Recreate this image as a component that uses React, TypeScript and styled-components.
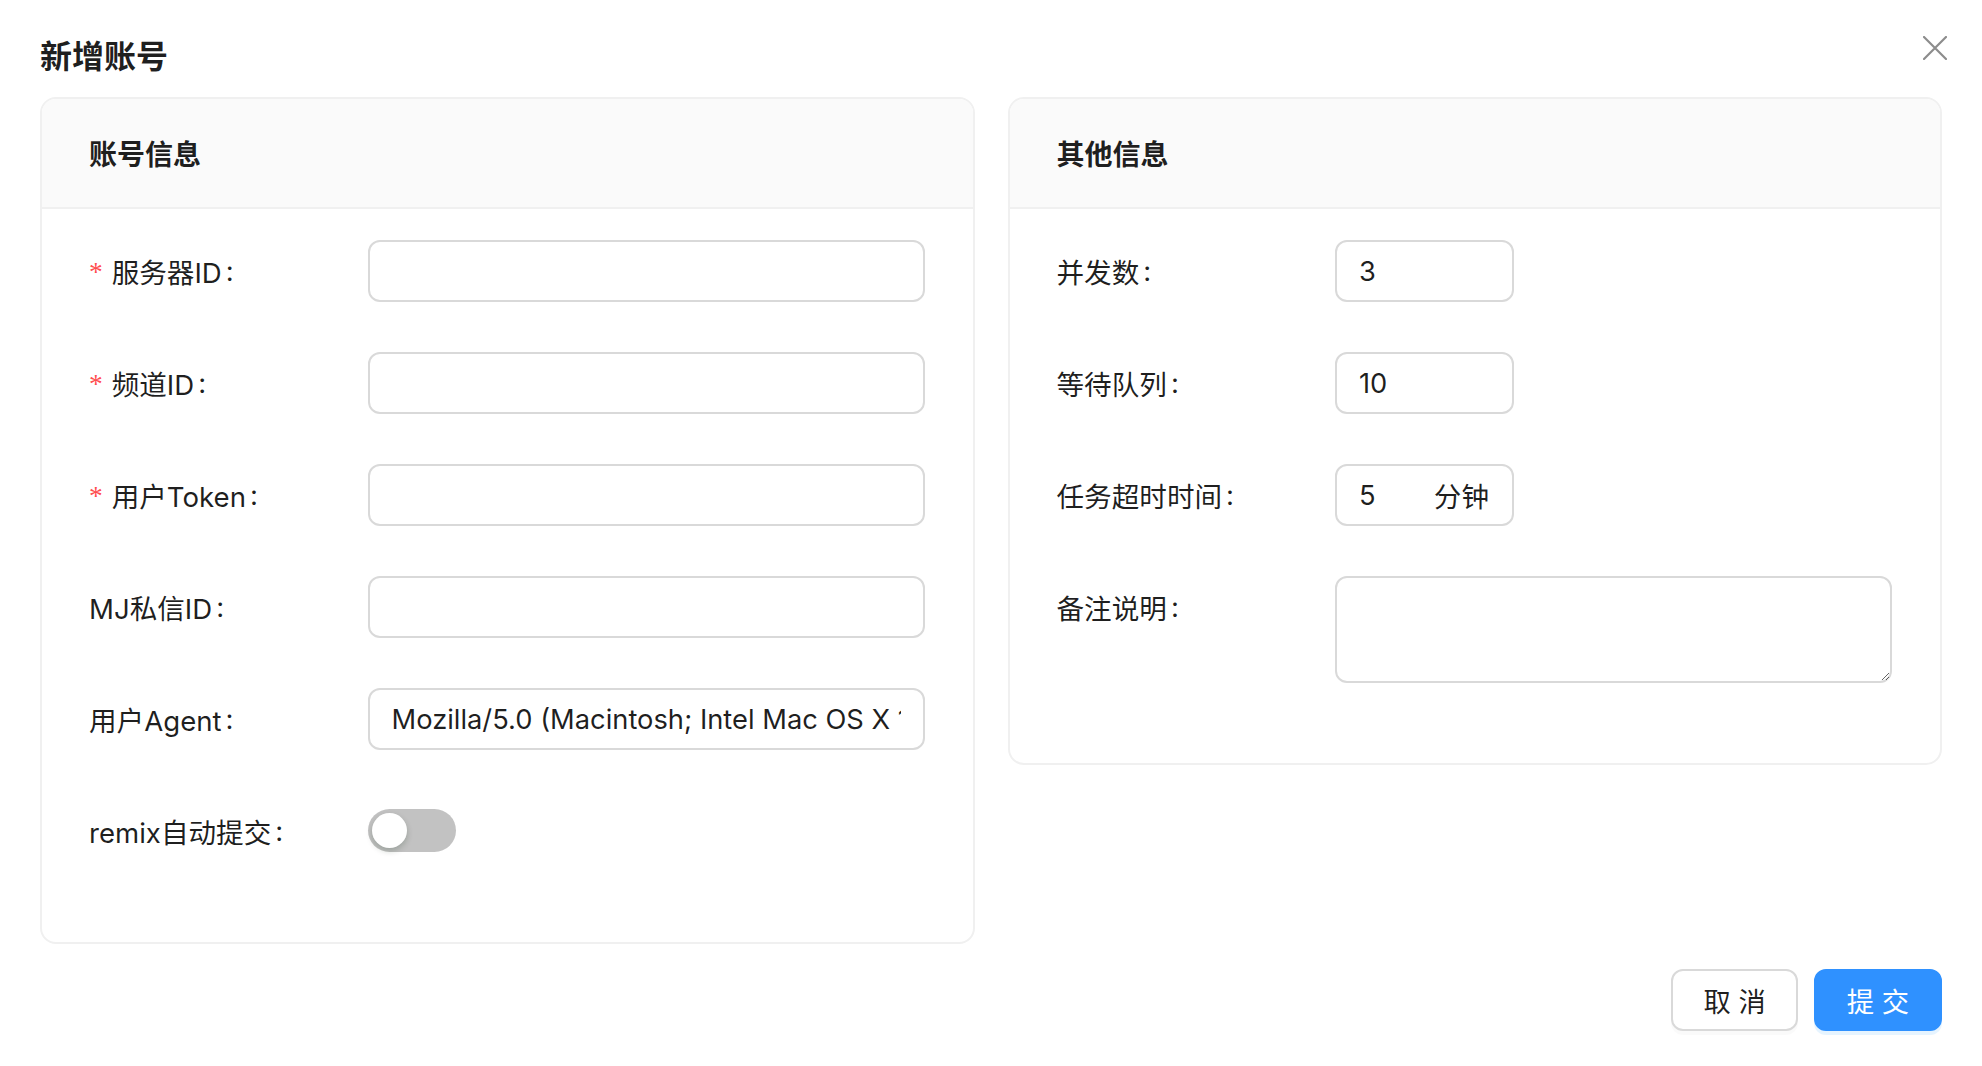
import React from "react";
import styled, { createGlobalStyle } from "styled-components";

const GlobalStyle = createGlobalStyle`
  html, body {
    margin: 0;
    padding: 0;
    background: #ffffff;
  }
  body {
    font-family: Inter, "Noto Sans CJK SC", sans-serif;
    color: rgba(0, 0, 0, 0.88);
  }
  * { box-sizing: border-box; }
`;

const Modal = styled.div`
  position: relative;
  padding: 33px 40px 30px 40px;
  background: #ffffff;
`;

const Title = styled.div`
  font-size: 32px;
  font-weight: 600;
  line-height: 47px;
  margin-bottom: 17px;
`;

const CloseButton = styled.button`
  position: absolute;
  top: 36px;
  right: 35px;
  width: 24px;
  height: 24px;
  padding: 0;
  border: none;
  background: transparent;
  display: flex;
  align-items: center;
  justify-content: center;
  cursor: pointer;
`;

const Columns = styled.div`
  display: grid;
  grid-template-columns: 1fr 1fr;
  column-gap: 33px;
  align-items: start;
`;

const Card = styled.section`
  border: 2px solid #f0f0f0;
  border-radius: 16px;
  overflow: hidden;
  background: #ffffff;
`;

const CardHeader = styled.div`
  height: 110px;
  display: flex;
  align-items: center;
  padding: 0 47px;
  background: #fafafa;
  border-bottom: 2px solid #f0f0f0;
  font-size: 28px;
  font-weight: 600;
`;

const CardBody = styled.div`
  padding: 31px 48px 30px 47px;
`;

const FormItem = styled.div`
  display: grid;
  grid-template-columns: 1fr 2fr;
  align-items: start;
  margin-bottom: 50px;
`;

const Label = styled.label`
  height: 62px;
  display: flex;
  align-items: center;
  font-size: 27.6px;
  white-space: nowrap;
`;

const Required = styled.span`
  color: #ff4d4f;
  font-family: "Liberation Serif", "DejaVu Serif", serif;
  font-size: 27.3px;
  margin-right: 9px;
  line-height: 1;
  padding-top: 4px;
`;

const Colon = styled.span`
  margin-left: 4px;
`;

const TextInput = styled.input<{ $narrow?: boolean }>`
  width: ${(p) => (p.$narrow ? "179px" : "100%")};
  height: 62px;
  padding: 0 22px;
  border: 2px solid #d9d9d9;
  border-radius: 12px;
  font-family: Inter, "Noto Sans CJK SC", sans-serif;
  font-size: 27.3px;
  color: rgba(0, 0, 0, 0.88);
  background: #ffffff;
  outline: none;
`;

const AffixWrapper = styled.span`
  width: 179px;
  height: 62px;
  display: inline-flex;
  align-items: center;
  padding: 0 23px 0 22px;
  border: 2px solid #d9d9d9;
  border-radius: 12px;
  background: #ffffff;
`;

const AffixInput = styled.input`
  flex: 1;
  min-width: 0;
  border: none;
  padding: 0;
  outline: none;
  font-family: Inter, "Noto Sans CJK SC", sans-serif;
  font-size: 27.3px;
  color: rgba(0, 0, 0, 0.88);
  background: transparent;
`;

const Suffix = styled.span`
  font-size: 27.6px;
  margin-left: 8px;
`;

const TextArea = styled.textarea`
  width: 100%;
  height: 107px;
  padding: 10px 22px;
  border: 2px solid #d9d9d9;
  border-radius: 12px;
  font-family: Inter, "Noto Sans CJK SC", sans-serif;
  font-size: 27.3px;
  resize: vertical;
  outline: none;
  display: block;
`;

const SwitchTrack = styled.button<{ $on?: boolean }>`
  position: relative;
  width: 88px;
  height: 43px;
  margin-top: 9px;
  border: none;
  padding: 0;
  border-radius: 22px;
  background: ${(p) => (p.$on ? "#2f91ff" : "rgba(0, 0, 0, 0.24)")};
  cursor: pointer;
`;

const SwitchKnob = styled.span<{ $on?: boolean }>`
  position: absolute;
  top: 4px;
  left: ${(p) => (p.$on ? "49px" : "4px")};
  width: 35px;
  height: 35px;
  border-radius: 50%;
  background: #ffffff;
  box-shadow: 0 3px 6px 0 rgba(0, 35, 11, 0.2);
`;

const Footer = styled.div`
  display: flex;
  justify-content: flex-end;
  gap: 16px;
  margin-top: 25px;
`;

const Button = styled.button<{ $primary?: boolean }>`
  height: 62px;
  padding: 0 ${(p) => (p.$primary ? "31px" : "30px")};
  border-radius: 12px;
  border: 2px solid ${(p) => (p.$primary ? "#2f91ff" : "#d9d9d9")};
  background: ${(p) => (p.$primary ? "#2f91ff" : "#ffffff")};
  color: ${(p) => (p.$primary ? "#ffffff" : "rgba(0, 0, 0, 0.88)")};
  font-family: Inter, "Noto Sans CJK SC", sans-serif;
  font-size: 27.3px;
  box-shadow: ${(p) =>
    p.$primary ? "0 4px 0 rgba(5, 145, 255, 0.1)" : "0 4px 0 rgba(0, 0, 0, 0.02)"};
  cursor: pointer;
`;

const CloseIcon = () => (
  <svg width="24" height="24" viewBox="0 0 24 24" fill="none">
    <path d="M1 1 L23 23 M23 1 L1 23" stroke="rgba(0,0,0,0.45)" strokeWidth="2.2" strokeLinecap="round" />
  </svg>
);

type FieldProps = {
  label: string;
  required?: boolean;
  children: React.ReactNode;
};

const Field = ({ label, required, children }: FieldProps) => (
  <FormItem>
    <Label>
      {required && <Required>*</Required>}
      {label}
      <Colon>:</Colon>
    </Label>
    <div>{children}</div>
  </FormItem>
);

const UA =
  "Mozilla/5.0 (Macintosh; Intel Mac OS X 10_15_7) AppleWebKit/537.36 (KHTML, like Gecko) Chrome/120.0.0.0 Safari/537.36";

export default function App() {
  return (
    <>
      <GlobalStyle />
      <Modal>
        <Title>新增账号</Title>
        <CloseButton aria-label="close">
          <CloseIcon />
        </CloseButton>
        <Columns>
          <Card>
            <CardHeader>账号信息</CardHeader>
            <CardBody>
              <Field label="服务器ID" required>
                <TextInput />
              </Field>
              <Field label="频道ID" required>
                <TextInput />
              </Field>
              <Field label="用户Token" required>
                <TextInput />
              </Field>
              <Field label="MJ私信ID">
                <TextInput />
              </Field>
              <Field label="用户Agent">
                <TextInput defaultValue={UA} />
              </Field>
              <Field label="remix自动提交">
                <SwitchTrack type="button">
                  <SwitchKnob />
                </SwitchTrack>
              </Field>
            </CardBody>
          </Card>
          <Card>
            <CardHeader>其他信息</CardHeader>
            <CardBody>
              <Field label="并发数">
                <TextInput $narrow defaultValue="3" />
              </Field>
              <Field label="等待队列">
                <TextInput $narrow defaultValue="10" />
              </Field>
              <Field label="任务超时时间">
                <AffixWrapper>
                  <AffixInput defaultValue="5" />
                  <Suffix>分钟</Suffix>
                </AffixWrapper>
              </Field>
              <Field label="备注说明">
                <TextArea />
              </Field>
            </CardBody>
          </Card>
        </Columns>
        <Footer>
          <Button type="button">取 消</Button>
          <Button type="button" $primary>
            提 交
          </Button>
        </Footer>
      </Modal>
    </>
  );
}
